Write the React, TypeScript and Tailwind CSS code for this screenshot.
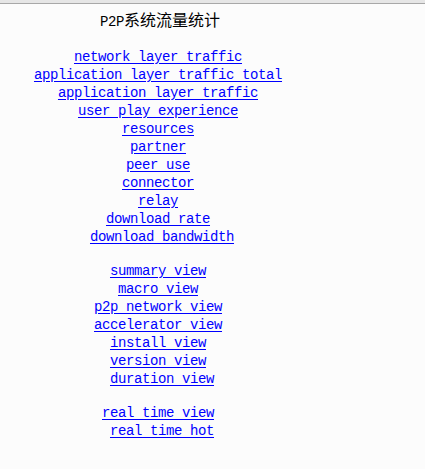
const groups: { label: string; shift?: boolean }[][] = [
  [
    { label: "network layer traffic" },
    { label: "application layer traffic total" },
    { label: "application layer traffic" },
    { label: "user play experience" },
    { label: "resources" },
    { label: "partner" },
    { label: "peer use" },
    { label: "connector" },
    { label: "relay" },
    { label: "download rate" },
    { label: "download bandwidth", shift: true },
  ],
  [
    { label: "summary view" },
    { label: "macro view" },
    { label: "p2p network view" },
    { label: "accelerator view" },
    { label: "install view" },
    { label: "version view" },
    { label: "duration view", shift: true },
  ],
  [
    { label: "real time view" },
    { label: "real time hot", shift: true },
  ],
];

const mono = "font-['Liberation_Mono','DejaVu_Sans_Mono',monospace] text-[14px] tracking-[-0.4px]";

export default function App() {
  return (
    <div className="min-h-[469px] bg-[#fcfcfc] text-black">
      <div className="h-[3px] bg-[#e6e6e6]" />
      <div className="h-px bg-[#a8a8a8]" />

      <div className="w-[316px] pt-[6px] text-center leading-[18px]">
        <h1 className="ml-1 h-[18px] font-normal">
          <span className={mono}>P2P</span>
          <span className="font-['Noto_Sans_CJK_SC',sans-serif] text-[16px]">系统流量统计</span>
        </h1>

        <div className="mt-[18px] flex flex-col gap-4">
          {groups.map((group, gi) => (
            <ul key={gi} className="flex flex-col items-center">
              {group.map((item) => (
                <li key={item.label} className={`h-[18px] ${item.shift ? "ml-2" : ""}`}>
                  <a
                    href="#"
                    className={`${mono} whitespace-pre text-[#0000ff] underline underline-offset-2`}
                  >
                    {item.label}
                  </a>
                </li>
              ))}
            </ul>
          ))}
        </div>
      </div>
    </div>
  );
}
